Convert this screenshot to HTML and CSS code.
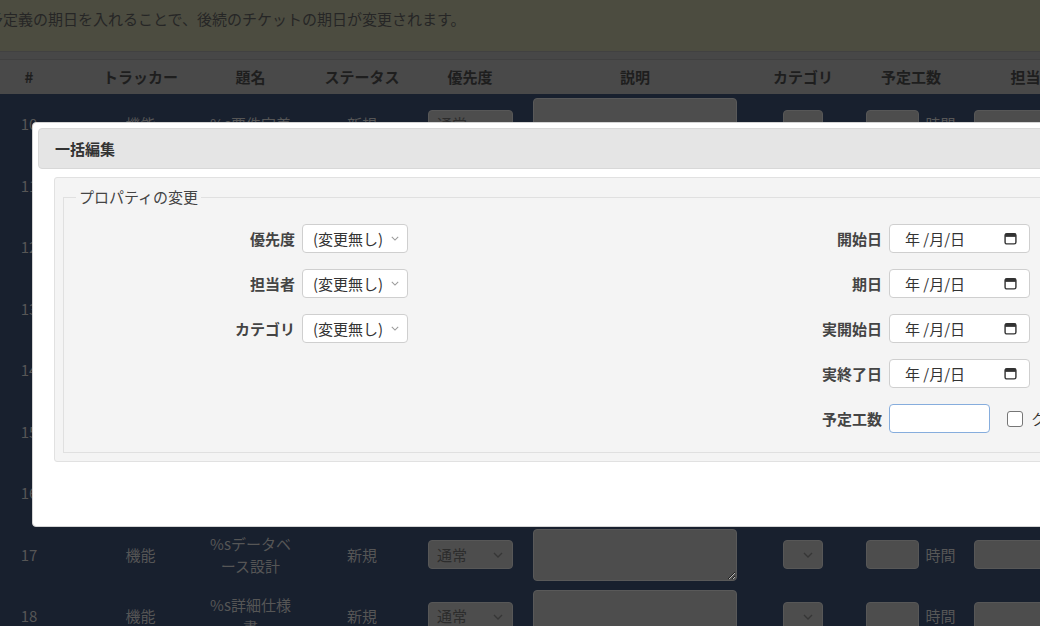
FILE: index.html
```html
<!DOCTYPE html>
<html lang="ja">
<head>
    <meta charset="UTF-8">
    <title>一括編集</title>
    <link rel="stylesheet" href="styles.css">
</head>
<body>
    <div class="page">
        <div class="flash">予定義の期日を入れることで、後続のチケットの期日が変更されます。</div>

        <div class="content">
            <table class="issues">
                <colgroup>
                    <col style="width: 98px">
                    <col style="width: 125px">
                    <col style="width: 95px">
                    <col style="width: 128px">
                    <col style="width: 88px">
                    <col style="width: 242px">
                    <col style="width: 94px">
                    <col style="width: 122px">
                    <col style="width: 122px">
                    <col style="width: 120px">
                </colgroup>
                <thead>
                    <tr>
                        <th>#</th>
                        <th>トラッカー</th>
                        <th>題名</th>
                        <th>ステータス</th>
                        <th>優先度</th>
                        <th>説明</th>
                        <th>カテゴリ</th>
                        <th>予定工数</th>
                        <th>担当者</th>
                        <th>開始日</th>
                    </tr>
                </thead>
                <tbody>
                    <tr>
                        <td>10</td><td>機能</td><td>%s要件定義</td><td>新規</td>
                        <td><span class="select dim"><select class="priority"><option>通常</option></select><svg class="chev" viewBox="0 0 10 6"><path d="M1 1l4 4 4-4"/></svg></span></td>
                        <td><textarea></textarea></td>
                        <td><span class="select dim"><select class="category"><option></option></select><svg class="chev" viewBox="0 0 10 6"><path d="M1 1l4 4 4-4"/></svg></span></td>
                        <td><input class="hours"><span class="unit">時間</span></td>
                        <td><input class="assignee"></td>
                        <td></td>
                    </tr>
                    <tr>
                        <td>11</td><td>機能</td><td>%s基本設計</td><td>新規</td>
                        <td><span class="select dim"><select class="priority"><option>通常</option></select><svg class="chev" viewBox="0 0 10 6"><path d="M1 1l4 4 4-4"/></svg></span></td>
                        <td><textarea></textarea></td>
                        <td><span class="select dim"><select class="category"><option></option></select><svg class="chev" viewBox="0 0 10 6"><path d="M1 1l4 4 4-4"/></svg></span></td>
                        <td><input class="hours"><span class="unit">時間</span></td>
                        <td><input class="assignee"></td>
                        <td></td>
                    </tr>
                    <tr>
                        <td>12</td><td>機能</td><td>%s画面設計</td><td>新規</td>
                        <td><span class="select dim"><select class="priority"><option>通常</option></select><svg class="chev" viewBox="0 0 10 6"><path d="M1 1l4 4 4-4"/></svg></span></td>
                        <td><textarea></textarea></td>
                        <td><span class="select dim"><select class="category"><option></option></select><svg class="chev" viewBox="0 0 10 6"><path d="M1 1l4 4 4-4"/></svg></span></td>
                        <td><input class="hours"><span class="unit">時間</span></td>
                        <td><input class="assignee"></td>
                        <td></td>
                    </tr>
                    <tr>
                        <td>13</td><td>機能</td><td>%s実装</td><td>新規</td>
                        <td><span class="select dim"><select class="priority"><option>通常</option></select><svg class="chev" viewBox="0 0 10 6"><path d="M1 1l4 4 4-4"/></svg></span></td>
                        <td><textarea></textarea></td>
                        <td><span class="select dim"><select class="category"><option></option></select><svg class="chev" viewBox="0 0 10 6"><path d="M1 1l4 4 4-4"/></svg></span></td>
                        <td><input class="hours"><span class="unit">時間</span></td>
                        <td><input class="assignee"></td>
                        <td></td>
                    </tr>
                    <tr>
                        <td>14</td><td>機能</td><td>%s単体テスト</td><td>新規</td>
                        <td><span class="select dim"><select class="priority"><option>通常</option></select><svg class="chev" viewBox="0 0 10 6"><path d="M1 1l4 4 4-4"/></svg></span></td>
                        <td><textarea></textarea></td>
                        <td><span class="select dim"><select class="category"><option></option></select><svg class="chev" viewBox="0 0 10 6"><path d="M1 1l4 4 4-4"/></svg></span></td>
                        <td><input class="hours"><span class="unit">時間</span></td>
                        <td><input class="assignee"></td>
                        <td></td>
                    </tr>
                    <tr>
                        <td>15</td><td>機能</td><td>%s結合テスト</td><td>新規</td>
                        <td><span class="select dim"><select class="priority"><option>通常</option></select><svg class="chev" viewBox="0 0 10 6"><path d="M1 1l4 4 4-4"/></svg></span></td>
                        <td><textarea></textarea></td>
                        <td><span class="select dim"><select class="category"><option></option></select><svg class="chev" viewBox="0 0 10 6"><path d="M1 1l4 4 4-4"/></svg></span></td>
                        <td><input class="hours"><span class="unit">時間</span></td>
                        <td><input class="assignee"></td>
                        <td></td>
                    </tr>
                    <tr>
                        <td>16</td><td>機能</td><td>%sリリース</td><td>新規</td>
                        <td><span class="select dim"><select class="priority"><option>通常</option></select><svg class="chev" viewBox="0 0 10 6"><path d="M1 1l4 4 4-4"/></svg></span></td>
                        <td><textarea></textarea></td>
                        <td><span class="select dim"><select class="category"><option></option></select><svg class="chev" viewBox="0 0 10 6"><path d="M1 1l4 4 4-4"/></svg></span></td>
                        <td><input class="hours"><span class="unit">時間</span></td>
                        <td><input class="assignee"></td>
                        <td></td>
                    </tr>
                    <tr>
                        <td>17</td><td>機能</td><td>%sデータベース設計</td><td>新規</td>
                        <td><span class="select dim"><select class="priority"><option>通常</option></select><svg class="chev" viewBox="0 0 10 6"><path d="M1 1l4 4 4-4"/></svg></span></td>
                        <td><textarea></textarea></td>
                        <td><span class="select dim"><select class="category"><option></option></select><svg class="chev" viewBox="0 0 10 6"><path d="M1 1l4 4 4-4"/></svg></span></td>
                        <td><input class="hours"><span class="unit">時間</span></td>
                        <td><input class="assignee"></td>
                        <td></td>
                    </tr>
                    <tr>
                        <td>18</td><td>機能</td><td>%s詳細仕様書</td><td>新規</td>
                        <td><span class="select dim"><select class="priority"><option>通常</option></select><svg class="chev" viewBox="0 0 10 6"><path d="M1 1l4 4 4-4"/></svg></span></td>
                        <td><textarea></textarea></td>
                        <td><span class="select dim"><select class="category"><option></option></select><svg class="chev" viewBox="0 0 10 6"><path d="M1 1l4 4 4-4"/></svg></span></td>
                        <td><input class="hours"><span class="unit">時間</span></td>
                        <td><input class="assignee"></td>
                        <td></td>
                    </tr>
                </tbody>
            </table>
        </div>
    </div>

    <div class="dialog">
        <div class="dialog-title">一括編集</div>
        <div class="dialog-content">
            <div class="box">
                <fieldset class="attributes">
                    <legend>プロパティの変更</legend>
                    <div class="split">
                        <div class="split-col">
                            <p class="field">
                                <label>優先度</label>
                                <span class="select"><select><option>(変更無し)</option></select><svg class="chev" viewBox="0 0 10 6"><path d="M1 1l4 4 4-4"/></svg></span>
                            </p>
                            <p class="field">
                                <label>担当者</label>
                                <span class="select"><select><option>(変更無し)</option></select><svg class="chev" viewBox="0 0 10 6"><path d="M1 1l4 4 4-4"/></svg></span>
                            </p>
                            <p class="field">
                                <label>カテゴリ</label>
                                <span class="select"><select><option>(変更無し)</option></select><svg class="chev" viewBox="0 0 10 6"><path d="M1 1l4 4 4-4"/></svg></span>
                            </p>
                        </div>
                        <div class="split-col">
                            <p class="field">
                                <label>開始日</label>
                                <span class="date"><input placeholder="年 /月/日"><svg class="cal" viewBox="0 0 12 12"><rect x="1" y="1.5" width="10" height="9.5" rx="1.6"/><rect class="bar" x="1" y="1.5" width="10" height="3"/></svg></span>
                            </p>
                            <p class="field">
                                <label>期日</label>
                                <span class="date"><input placeholder="年 /月/日"><svg class="cal" viewBox="0 0 12 12"><rect x="1" y="1.5" width="10" height="9.5" rx="1.6"/><rect class="bar" x="1" y="1.5" width="10" height="3"/></svg></span>
                            </p>
                            <p class="field">
                                <label>実開始日</label>
                                <span class="date"><input placeholder="年 /月/日"><svg class="cal" viewBox="0 0 12 12"><rect x="1" y="1.5" width="10" height="9.5" rx="1.6"/><rect class="bar" x="1" y="1.5" width="10" height="3"/></svg></span>
                            </p>
                            <p class="field">
                                <label>実終了日</label>
                                <span class="date"><input placeholder="年 /月/日"><svg class="cal" viewBox="0 0 12 12"><rect x="1" y="1.5" width="10" height="9.5" rx="1.6"/><rect class="bar" x="1" y="1.5" width="10" height="3"/></svg></span>
                            </p>
                            <p class="field">
                                <label>予定工数</label>
                                <input class="estimate focused">
                                <label class="clear"><input type="checkbox"> クリア</label>
                            </p>
                        </div>
                    </div>
                </fieldset>
            </div>
        </div>
    </div>
</body>
</html>
```

FILE: styles.css
```css
body {
    margin: 0;
    overflow: hidden;
    background: #18202e;
    font-family: "Noto Sans CJK JP", "Liberation Sans", sans-serif;
    font-size: 15px;
    color: #333;
}

/* page is scrolled 20px to the right */
.page { margin-left: -20px; width: 1300px; }

.flash {
    height: 52px;
    box-sizing: border-box;
    padding: 8px 0 0 8px;
    line-height: 22px;
    background: #4c4c40;
    color: #262626;
    border-bottom: 1px solid #414141;
}

.content { background: #474747; padding-top: 7px; }

.issues { border-collapse: collapse; table-layout: fixed; width: 1234px; }
.issues th {
    height: 34px;
    box-sizing: border-box;
    padding: 0;
    background: #494949;
    border-top: 1px solid #404040;
    color: #1e1e1e;
    font-weight: bold;
    text-align: center;
}
.issues td {
    height: 61.5px;
    box-sizing: border-box;
    padding: 0 2px;
    background: #18202e;
    color: #565656;
    text-align: center;
    vertical-align: middle;
    line-height: 22px;
}

.select { position: relative; display: inline-block; vertical-align: middle; }
.select select {
    appearance: none;
    -webkit-appearance: none;
    height: 29px;
    width: 106px;
    padding: 0 20px 0 10px;
    border: 1px solid #cfcfcf;
    border-radius: 4px;
    background: #fff;
    font: inherit;
    color: #333;
    display: block;
}
.chev {
    position: absolute;
    right: 9px;
    top: 12px;
    width: 8px;
    height: 5px;
    fill: none;
    stroke: #9a9a9a;
    stroke-width: 1.3;
}

.select.dim select { background: #4d4d4d; border-color: #575757; color: #2c2c2c; padding-left: 8px; }
.select.dim .chev { width: 10px; height: 6px; right: 10px; stroke: #363636; }
.select.dim select.priority { width: 85px; }
.select.dim select.category { width: 40px; padding: 0; }

.issues textarea {
    width: 204px;
    height: 52px;
    box-sizing: border-box;
    background: #4d4d4d;
    border: 1px solid #595959;
    border-radius: 4px;
    vertical-align: middle;
    display: block;
    margin: 0 auto;
}
.issues input {
    height: 29px;
    box-sizing: border-box;
    background: #4d4d4d;
    border: 1px solid #575757;
    border-radius: 4px;
    vertical-align: middle;
}
.issues input.hours { width: 53px; }
.issues input.assignee { width: 118px; }
.unit { margin-left: 6px; color: #575757; vertical-align: middle; }

/* modal */
.dialog {
    position: absolute;
    left: 32px;
    top: 122px;
    width: 1262px;
    height: 405px;
    box-sizing: border-box;
    padding: 5px;
    background: #fff;
    border: 1px solid #d4d4d4;
    border-radius: 4px;
}
.dialog-title {
    height: 41px;
    box-sizing: border-box;
    padding: 0 16px;
    line-height: 39px;
    background: #e5e5e5;
    border: 1px solid #d8d8d8;
    border-radius: 4px;
    font-weight: bold;
    color: #333;
}
.dialog-content { padding: 8px 16px; }

.box {
    background: #f4f4f4;
    border: 1px solid #e1e1e1;
    border-radius: 3px;
    padding: 8px;
}
.attributes {
    margin: 0;
    padding: 16px 12px 19px;
    border: 1px solid #e0e0e0;
}
.attributes legend { padding: 0 3px; line-height: 22px; color: #444; }

.split { display: grid; grid-template-columns: 1fr 1fr; }
.split-col { display: flex; flex-direction: column; gap: 16px; }

.field { margin: 0; display: flex; align-items: center; height: 29px; }
.field > label {
    flex: 0 0 219px;
    margin-right: 7px;
    text-align: right;
    font-weight: bold;
    color: #444;
}

.date { position: relative; display: inline-block; }
.date input {
    width: 141px;
    height: 29px;
    box-sizing: border-box;
    padding: 0 0 0 15px;
    border: 1px solid #cfcfcf;
    border-radius: 4px;
    font: inherit;
    display: block;
}
.date input::placeholder { color: #333; }
.cal {
    position: absolute;
    right: 13px;
    top: 8px;
    width: 13px;
    height: 13px;
    fill: none;
    stroke: #333;
    stroke-width: 1.3;
}
.cal .bar { fill: #333; stroke: none; }

.estimate {
    width: 101px;
    height: 29px;
    box-sizing: border-box;
    border: 1px solid #cfcfcf;
    border-radius: 4px;
}
.estimate.focused { border-color: #86addd; outline: none; }

.field > label.clear {
    flex: none;
    margin: 0 0 0 17px;
    font-weight: normal;
    color: #333;
    display: flex;
    align-items: center;
    white-space: nowrap;
}
.clear input {
    appearance: none;
    -webkit-appearance: none;
    width: 16px;
    height: 16px;
    margin: 0 8px 0 0;
    border: 1px solid #767676;
    border-radius: 3px;
    background: #fff;
}
```
